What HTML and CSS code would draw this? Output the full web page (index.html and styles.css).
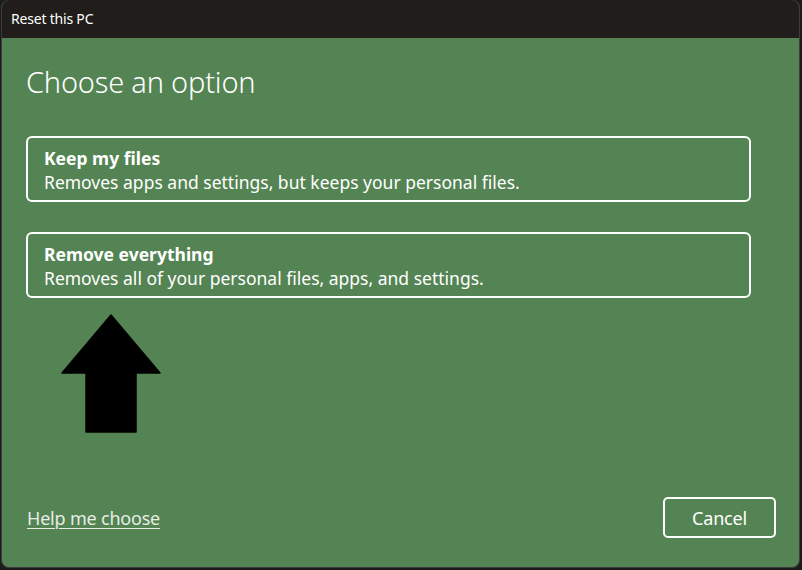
FILE: index.html
```html
<!DOCTYPE html>
<html lang="en">
<head>
<meta charset="utf-8">
<title>Reset this PC</title>
<link rel="stylesheet" href="styles.css">
</head>
<body>
<div class="window">
  <div class="titlebar">Reset this PC</div>
  <div class="content">
    <h1 class="heading">Choose an option</h1>
    <div class="options">
      <div class="option">
        <div class="option-title">Keep my files</div>
        <div class="option-desc">Removes apps and settings, but keeps your personal files.</div>
      </div>
      <div class="option">
        <div class="option-title">Remove everything</div>
        <div class="option-desc">Removes all of your personal files, apps, and settings.</div>
      </div>
    </div>
    <div class="arrow-wrap">
      <svg class="arrow" width="102" height="122" viewBox="0 0 102 122">
        <polygon points="50,1 1,59 25,59 25,118 75,118 75,59 99,59" fill="#000" stroke="#000" stroke-width="1.5" stroke-linejoin="round"/>
      </svg>
    </div>
    <div class="footer">
      <a class="help" href="#">Help me choose</a>
      <button class="cancel">Cancel</button>
    </div>
  </div>
</div>
</body>
</html>
```
FILE: styles.css
```css
html, body {
  margin: 0;
  padding: 0;
  background: #1b1b1b;
  height: 570px;
  overflow: hidden;
}
body {
  font-family: "Noto Sans", "Open Sans", sans-serif;
  color: #fff;
}
.window {
  margin-left: 1px;
  width: 797px;
  height: 567px;
  border: 1px solid #3d3d3d;
  border-top: none;
  border-radius: 8px;
  overflow: hidden;
  display: flex;
  flex-direction: column;
  background: #548453;
}
.titlebar {
  height: 38px;
  background: #201d1a;
  font-size: 14px;
  line-height: 37px;
  padding-left: 9px;
  color: #fff;
  flex: none;
  letter-spacing: -0.2px;
}
.content {
  flex: 1;
  display: flex;
  flex-direction: column;
  padding: 0 24px 0 24px;
}
.heading {
  margin: 24px 0 0 0;
  font-size: 29px;
  font-weight: 300;
  line-height: 40px;
  letter-spacing: -0.2px;
}
.options {
  margin-top: 34px;
  display: flex;
  flex-direction: column;
  gap: 30px;
}
.option {
  width: 725px;
  height: 66px;
  border: 2.5px solid #fff;
  border-radius: 6px;
  padding: 9px 0 0 16px;
  box-sizing: border-box;
}
.option-title {
  font-size: 17.5px;
  font-weight: 700;
  line-height: 22px;
  letter-spacing: 0;
}
.option-desc {
  font-size: 17.5px;
  line-height: 26px;
  letter-spacing: 0;
}
.arrow-wrap {
  margin: 16px 0 0 35px;
  height: 122px;
}
.arrow {
  display: block;
}
.footer {
  margin-top: auto;
  margin-bottom: 29px;
  display: flex;
  align-items: center;
  justify-content: space-between;
}
.help {
  color: #e6ede6;
  font-size: 18px;
  text-decoration: underline;
  text-underline-offset: 3px;
  text-decoration-thickness: 1px;
  margin-left: 1px;
  letter-spacing: -0.2px;
  margin-top: 1px;
}
.cancel {
  width: 113px;
  height: 41px;
  background: transparent;
  border: 2.5px solid #fff;
  border-radius: 5px;
  color: #fff;
  font-family: "Noto Sans", "Open Sans", sans-serif;
  font-size: 18px;
  letter-spacing: -0.2px;
  padding: 0;
  margin-right: -1px;
}
```
